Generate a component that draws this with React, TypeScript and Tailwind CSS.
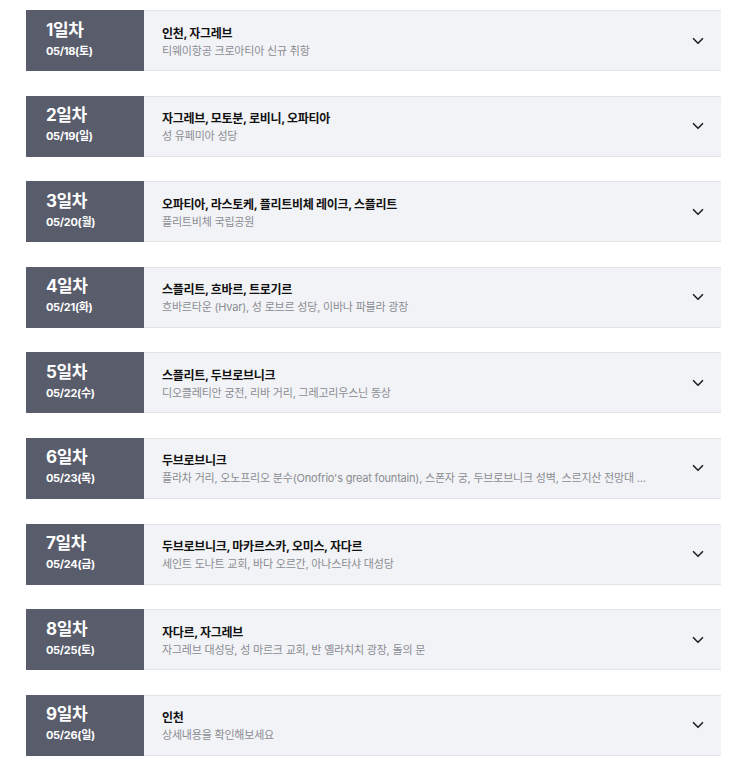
import {ChevronDown} from "lucide-react";

const days = [
  {day: "1일차", date: "05/18(토)", title: "인천, 자그레브", desc: "티웨이항공 크로아티아 신규 취항"},
  {day: "2일차", date: "05/19(일)", title: "자그레브, 모토분, 로비니, 오파티아", desc: "성 유페미아 성당"},
  {day: "3일차", date: "05/20(월)", title: "오파티아, 라스토케, 플리트비체 레이크, 스플리트", desc: "플리트비체 국립공원"},
  {day: "4일차", date: "05/21(화)", title: "스플리트, 흐바르, 트로기르", desc: "흐바르타운 (Hvar), 성 로브르 성당, 이바나 파블라 광장"},
  {day: "5일차", date: "05/22(수)", title: "스플리트, 두브로브니크", desc: "디오클레티안 궁전, 리바 거리, 그레고리우스닌 동상"},
  {day: "6일차", date: "05/23(목)", title: "두브로브니크", desc: "플라차 거리, 오노프리오 분수(Onofrio's great fountain), 스폰자 궁, 두브로브니크 성벽, 스르지산 전망대 ..."},
  {day: "7일차", date: "05/24(금)", title: "두브로브니크, 마카르스카, 오미스, 자다르", desc: "세인트 도나트 교회, 바다 오르간, 아나스타샤 대성당"},
  {day: "8일차", date: "05/25(토)", title: "자다르, 자그레브", desc: "자그레브 대성당, 성 마르크 교회, 반 옐라치치 광장, 돌의 문"},
  {day: "9일차", date: "05/26(일)", title: "인천", desc: "상세내용을 확인해보세요"},
];

export default function App() {
  return (
    <div
      className="min-h-[771px] bg-white px-[26px] pt-[10px] tracking-[-0.2px]"
      style={{fontFamily: 'Inter, "Noto Sans CJK KR", sans-serif'}}
    >
      <div className="flex w-[695px] flex-col gap-[24.6px]">
        {days.map((d) => (
          <div key={d.day} className="flex h-[61px] border-y border-[#e3e4e8] bg-[#f2f3f6]">
            {/* day badge */}
            <div className="-my-px flex w-[118px] shrink-0 flex-col justify-center bg-[#585c6b] pb-[4px] pl-5 text-white">
              <span className="text-[17px] font-bold leading-[22px] tracking-[-0.4px]">{d.day}</span>
              <span className="mt-[3px] text-[11px] font-bold leading-[15px] tracking-[-0.3px]">{d.date}</span>
            </div>
            <div className="flex min-w-0 flex-1 items-center pl-[18px] pr-[14px] pt-[2px]">
              <div className="flex min-w-0 flex-1 flex-col">
                <span className="text-[12px] font-bold leading-[17px] tracking-[-0.3px] text-[#111]">{d.title}</span>
                <span className="mt-[1px] truncate text-[11px] leading-[16px] text-[#8a8c92]">{d.desc}</span>
              </div>
              <ChevronDown className="ml-4 -mt-[2px] h-[18px] w-[18px] shrink-0 text-[#222]" strokeWidth={2.2} />
            </div>
          </div>
        ))}
      </div>
    </div>
  );
}
